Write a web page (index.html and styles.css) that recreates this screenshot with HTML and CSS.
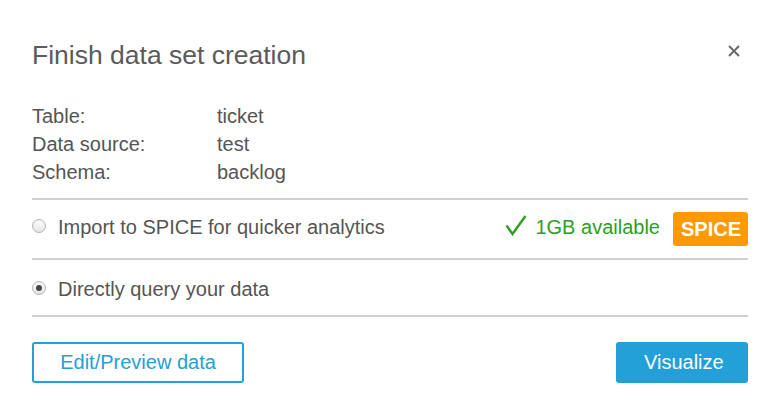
FILE: index.html
```html
<!DOCTYPE html>
<html lang="en">
<head>
<meta charset="utf-8">
<title>Finish data set creation</title>
<link rel="stylesheet" href="styles.css">
</head>
<body>
<div class="modal">
  <div class="header">
    <h1 class="title">Finish data set creation</h1>
    <button class="close" aria-label="Close">
      <svg width="12" height="12" viewBox="0 0 12 12"><path d="M1 1 L11 11 M11 1 L1 11" stroke="#666" stroke-width="1.8" fill="none"/></svg>
    </button>
  </div>
  <div class="info">
    <div class="label">Table:</div><div class="value">ticket</div>
    <div class="label">Data source:</div><div class="value">test</div>
    <div class="label">Schema:</div><div class="value">backlog</div>
  </div>
  <div class="option option-first">
    <span class="radio"></span>
    <span class="option-text">Import to SPICE for quicker analytics</span>
    <span class="avail">
      <svg class="check" width="22" height="21" viewBox="0 0 22 21"><path d="M1.5 10.5 L7.5 19 L20.5 1" stroke="#2ca01f" stroke-width="2.4" fill="none" stroke-linejoin="miter"/></svg>
      1GB available
    </span>
    <span class="badge">SPICE</span>
  </div>
  <div class="option option-second">
    <span class="radio radio-checked"></span>
    <span class="option-text">Directly query your data</span>
  </div>
  <div class="footer">
    <button class="btn btn-outline">Edit/Preview data</button>
    <button class="btn btn-primary">Visualize</button>
  </div>
</div>
</body>
</html>
```

FILE: styles.css
```css
* { box-sizing: border-box; }
html, body { margin: 0; padding: 0; background: #fff; }
body {
  font-family: "Liberation Sans", Arial, sans-serif;
  color: #555;
  width: 782px;
  height: 406px;
  overflow: hidden;
}
.modal {
  padding: 39px 34px 0 32px;
}
.header {
  display: flex;
  justify-content: space-between;
  align-items: flex-start;
}
.title {
  margin: 0;
  font-weight: normal;
  font-size: 26.5px;
  line-height: 32px;
  color: #5b5b5b;
}
.close {
  border: 0;
  background: none;
  padding: 0;
  margin: 6px 8px 0 0;
  width: 12px;
  height: 12px;
  display: block;
  cursor: pointer;
}
.close svg { display: block; }
.info {
  display: grid;
  grid-template-columns: 185px auto;
  font-size: 20px;
  line-height: 28px;
  margin-top: 31px;
  padding-bottom: 12px;
  border-bottom: 2px solid #d0d0d0;
  color: #555;
}
.option {
  display: flex;
  align-items: flex-start;
  font-size: 20px;
  line-height: 28px;
  border-bottom: 2px solid #d0d0d0;
}
.option-first {
  height: 60px;
  padding-top: 13px;
}
.option-second {
  padding: 15px 0 12px;
}
.radio {
  flex: none;
  width: 14px;
  height: 14px;
  border-radius: 50%;
  border: 1px solid #b5b5b5;
  background: linear-gradient(#fdfdfd, #e4e4e4);
  margin: 6px 12px 0 0;
  box-shadow: inset 0 1px 1px rgba(0,0,0,0.05);
  display: flex;
  align-items: center;
  justify-content: center;
}
.radio-checked::after {
  content: "";
  width: 6px;
  height: 6px;
  border-radius: 50%;
  background: #444;
}
.option-text { flex: 1; }
.avail {
  display: flex;
  align-items: center;
  color: #2ca01f;
  gap: 8px;
}
.check { display: block; margin-top: -4px; }
.badge {
  margin: -1px 0 0 13px;
  height: 34px;
  line-height: 34px;
  padding: 0 7px 0 8px;
  background: #ff9900;
  color: #fff;
  font-weight: bold;
  font-size: 20px;
  border-radius: 3px;
}
.footer {
  display: flex;
  justify-content: space-between;
  margin-top: 25px;
}
.btn {
  font-family: "Liberation Sans", Arial, sans-serif;
  font-size: 20px;
  height: 41px;
  border-radius: 3px;
  padding: 0 26px;
  cursor: pointer;
}
.btn-outline {
  background: #fff;
  border: 2px solid #24a0d8;
  color: #24a0d8;
  width: 212px;
}
.btn-primary {
  background: #24a0d8;
  border: 2px solid #24a0d8;
  color: #fff;
  width: 132px;
}
```
